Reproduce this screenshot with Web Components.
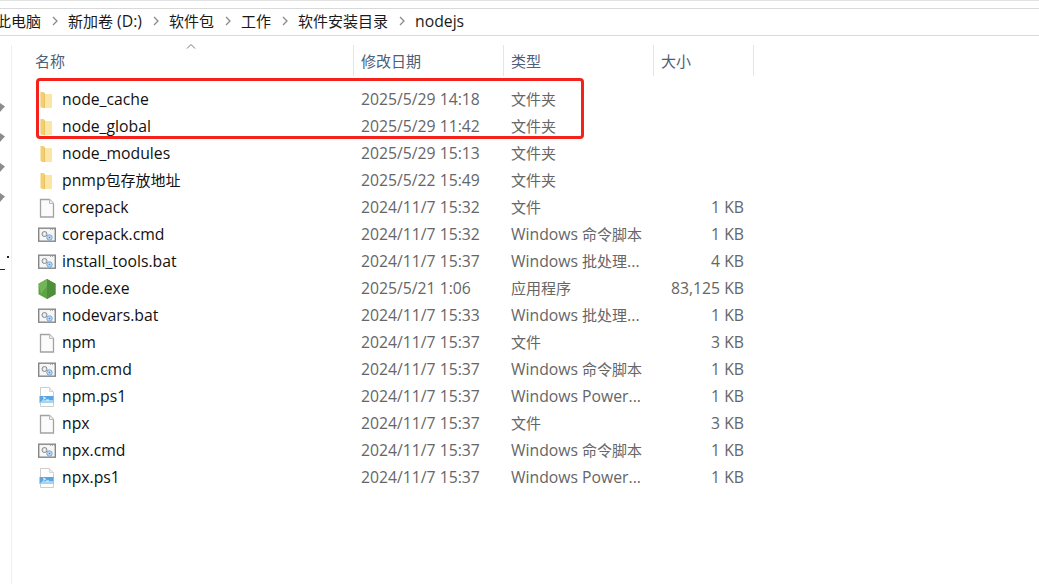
<!DOCTYPE html>
<html>
<head>
<meta charset="utf-8">
<style>
html, body { margin: 0; background: #fff; }
body { font-family: "Open Sans", "Noto Sans CJK SC", sans-serif; }
</style>
</head>
<body>
<explorer-window></explorer-window>
<script>
const FONT = `"Open Sans", "Noto Sans CJK SC", sans-serif`;

const files = [
  ["folder", "node_cache", "2025/5/29 14:18", "文件夹", ""],
  ["folder", "node_global", "2025/5/29 11:42", "文件夹", ""],
  ["folder", "node_modules", "2025/5/29 15:13", "文件夹", ""],
  ["folder", "pnmp包存放地址", "2025/5/22 15:49", "文件夹", ""],
  ["file", "corepack", "2024/11/7 15:32", "文件", "1 KB"],
  ["cmd", "corepack.cmd", "2024/11/7 15:32", "Windows 命令脚本", "1 KB"],
  ["cmd", "install_tools.bat", "2024/11/7 15:37", "Windows 批处理...", "4 KB"],
  ["node", "node.exe", "2025/5/21 1:06", "应用程序", "83,125 KB"],
  ["cmd", "nodevars.bat", "2024/11/7 15:33", "Windows 批处理...", "1 KB"],
  ["file", "npm", "2024/11/7 15:37", "文件", "3 KB"],
  ["cmd", "npm.cmd", "2024/11/7 15:37", "Windows 命令脚本", "1 KB"],
  ["ps", "npm.ps1", "2024/11/7 15:37", "Windows Power...", "1 KB"],
  ["file", "npx", "2024/11/7 15:37", "文件", "3 KB"],
  ["cmd", "npx.cmd", "2024/11/7 15:37", "Windows 命令脚本", "1 KB"],
  ["ps", "npx.ps1", "2024/11/7 15:37", "Windows Power...", "1 KB"],
];

// latin runs are set a bit larger than the chinese ones, like the original UI font
const cjk = (s) => s.replace(/[\u4e00-\u9fff]+/g, (m) => `<span class="c">${m}</span>`);

const icons = {
  folder: `<svg width="18" height="20" viewBox="0 0 18 20">
    <path d="M2.500 2h3L7 3.500V18H4l-1.500-1.500z" fill="#f3cf72"/>
    <path d="M6.500 4H14V18H6.500z" fill="#fce6a6"/>
    <path d="M6 3.500h1V18H6z" fill="#e9c35f"/></svg>`,
  file: `<svg width="18" height="20" viewBox="0 0 18 20">
    <path d="M2.500 1.500h9l4 4v13.500h-13z" fill="#fbfbfb" stroke="#a2a2a2" stroke-width="1.300"/>
    <path d="M11.500 1.500v4h4" fill="#efefef" stroke="#bcbcbc"/></svg>`,
  cmd: `<svg width="18" height="20" viewBox="0 0 18 20">
    <rect x=".7" y="3.200" width="16.600" height="13" fill="#f6f6f6" stroke="#868686" stroke-width="1.400"/>
    <path d="M12 4.500h1M14 4.500h1M16 4.500h.8" stroke="#a8a8a8"/>
    <circle cx="6.500" cy="9" r="2.500" fill="#e6e6e6" stroke="#8a8a8a"/>
    <circle cx="6.500" cy="9" r=".8" fill="#fff"/>
    <circle cx="11.500" cy="12.500" r="2.700" fill="#cfe2f5" stroke="#6aa2d6"/>
    <circle cx="11.500" cy="12.500" r="1" fill="#4f98dc"/></svg>`,
  node: `<svg width="18" height="20" viewBox="0 0 18 20">
    <path d="M9 0l8.500 4.800v10.400L9 20 .5 15.200V4.800z" fill="#5da344"/>
    <path d="M9 0l8.500 4.800v10.400L9 20z" fill="#4f8f3c"/>
    <path d="M.5 4.800L9 0v7L3 15z" fill="#74b458"/></svg>`,
  ps: `<svg width="18" height="20" viewBox="0 0 18 20">
    <path d="M2.500 .5h9l4 4v15h-13z" fill="#fff" stroke="#cdcdcd"/>
    <path d="M11.500 .5v4h4" fill="#eee" stroke="#d6d6d6"/>
    <rect x="1.500" y="9" width="14" height="7" fill="#5ba6e2"/>
    <path d="M1.500 16l3-3h11v3z" fill="#a2d5f3"/>
    <path d="M5 10l2.500 1.200L5 12.400M8 13h3" fill="none" stroke="#fff" stroke-width=".9"/></svg>`,
};

class FileIcon extends HTMLElement {
  connectedCallback() {
    this.attachShadow({ mode: "open" });
    this.shadowRoot.innerHTML = `<style>
      :host { display: block; width: 18px; height: 20px; }
      svg { display: block; }
    </style>${icons[this.getAttribute("kind")]}`;
  }
}
customElements.define("file-icon", FileIcon);

class BreadCrumb extends HTMLElement {
  connectedCallback() {
    this.attachShadow({ mode: "open" });
    const parts = ["此电脑", "新加卷 (D:)", "软件包", "工作", "软件安装目录", "nodejs"];
    this.shadowRoot.innerHTML = `<style>
      :host {
        display: flex; align-items: center; height: 24px; padding-bottom: 2px; overflow: hidden;
        border-top: 1px solid #d9d9d9; border-bottom: 1px solid #d9d9d9;
        font: 15.750px ${FONT}; color: #1a1a1a;
      }
      .inner { display: flex; align-items: center; margin-left: -4px; white-space: nowrap; }
      .c { font-size: 15px; }
      svg { margin: 0 10px 0 11px; display: block; }
    </style>
    <div class="inner">${parts.map((p, i) => (i ? `<svg width="6" height="10" viewBox="0 0 6 10"><path d="M1 1l4 4-4 4" fill="none" stroke="#8a8a8a" stroke-width="1.300"/></svg>` : "") + `<span>${cjk(p)}</span>`).join("")}</div>`;
  }
}
customElements.define("bread-crumb", BreadCrumb);

class ListHeader extends HTMLElement {
  connectedCallback() {
    this.attachShadow({ mode: "open" });
    const cols = [["名称", 324], ["修改日期", 150], ["类型", 150], ["大小", 100]];
    this.shadowRoot.innerHTML = `<style>
      :host {
        display: flex; height: 31px; margin-top: 9px;
        font: 15px ${FONT}; color: #4c607a; position: relative;
      }
      div { box-sizing: border-box; display: flex; align-items: center; padding-left: 7px; border-right: 1px solid #e5e5e5; }
      div:first-of-type { padding-left: 5px; }
      svg { position: absolute; left: 155px; top: -2px; }
    </style>
    <svg width="12" height="7" viewBox="0 0 12 7"><path d="M2 5.500l4-4 4 4" fill="none" stroke="#777" stroke-width="1"/></svg>
    ${cols.map(([t, w]) => `<div style="width:${w}px">${t}</div>`).join("")}`;
  }
}
customElements.define("list-header", ListHeader);

class FileRow extends HTMLElement {
  set data(d) { this._d = d; }
  connectedCallback() {
    const [kind, name, date, type, size] = this._d;
    this.attachShadow({ mode: "open" });
    this.shadowRoot.innerHTML = `<style>
      :host {
        display: grid; grid-template-columns: 323px 150px 150px 101px;
        height: 27px; align-items: center; white-space: nowrap;
        font: 15.750px/27px ${FONT}; color: #666;
      }
      .c { font-size: 15px; }
      .name { display: flex; align-items: center; gap: 6px; padding-left: 8px; color: #111; }
      .date { padding-left: 8px; }
      .type { padding-left: 8px; }
      .size { text-align: right; padding-right: 10px; }
    </style>
    <div class="name"><file-icon kind="${kind}"></file-icon><span>${cjk(name)}</span></div>
    <div class="date">${date}</div>
    <div class="type">${cjk(type)}</div>
    <div class="size">${size}</div>`;
  }
}
customElements.define("file-row", FileRow);

class SideStrip extends HTMLElement {
  connectedCallback() {
    this.attachShadow({ mode: "open" });
    const pin = `<svg width="6" height="10" viewBox="0 0 6 10"><path d="M0 0l5 3.500-2 2L0 9z" fill="#8c8c8c"/></svg>`;
    this.shadowRoot.innerHTML = `<style>
      :host {
        display: block; width: 11px; flex: none; margin-top: 9px;
        border-right: 1px solid #efefef; padding-top: 58px;
        position: relative; overflow: hidden;
      }
      svg { display: block; margin-bottom: 20px; }
      i, b { position: absolute; background: #222; }
      i { left: 0; top: 224px; width: 5px; height: 1px; }
      b { left: 7px; top: 211px; width: 2px; height: 2px; }
    </style>${pin.repeat(4)}<i></i><b></b>`;
  }
}
customElements.define("side-strip", SideStrip);

class FileList extends HTMLElement {
  connectedCallback() {
    this.attachShadow({ mode: "open" });
    this.shadowRoot.innerHTML = `<style>
      :host { display: block; position: relative; flex: 1; padding-left: 18px; }
      .rows { margin-top: 10px; display: block; }
      .box {
        position: absolute; left: 24px; top: 42px; width: 548px; height: 61px;
        box-sizing: border-box; border: 3.500px solid #f5211b; border-radius: 4px;
      }
    </style>
    <list-header></list-header>
    <div class="rows"></div>
    <div class="box"></div>`;
    const rows = this.shadowRoot.querySelector(".rows");
    files.forEach((f) => {
      const r = document.createElement("file-row");
      r.data = f;
      rows.appendChild(r);
    });
  }
}
customElements.define("file-list", FileList);

class ExplorerWindow extends HTMLElement {
  connectedCallback() {
    this.attachShadow({ mode: "open" });
    this.shadowRoot.innerHTML = `<style>
      :host { display: flex; flex-direction: column; width: 1039px; height: 584px; overflow: hidden; background: #fff; border-top: 1px solid #e2e2e2; box-sizing: border-box; padding-top: 7px; }
      bread-crumb { flex: none; }
      .main { display: flex; flex: 1; }
    </style>
    <bread-crumb></bread-crumb>
    <div class="main"><side-strip></side-strip><file-list></file-list></div>`;
  }
}
customElements.define("explorer-window", ExplorerWindow);
</script>
</body>
</html>
